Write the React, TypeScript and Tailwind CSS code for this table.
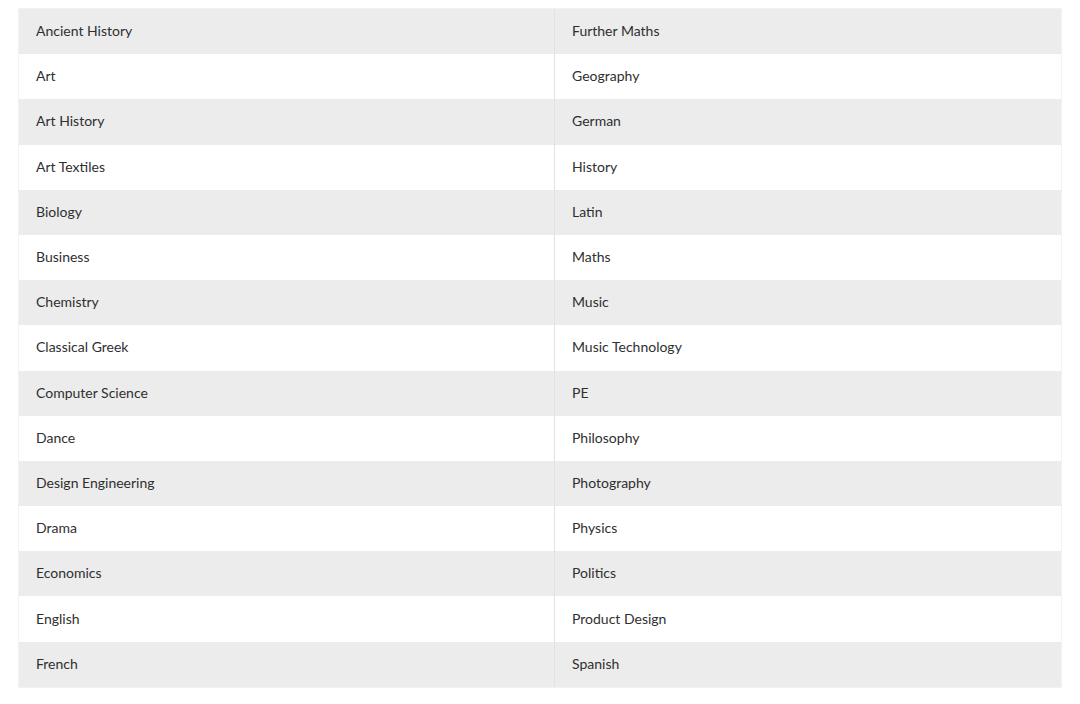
const rows: [string, string][] = [
  ["Ancient History", "Further Maths"],
  ["Art", "Geography"],
  ["Art History", "German"],
  ["Art Textiles", "History"],
  ["Biology", "Latin"],
  ["Business", "Maths"],
  ["Chemistry", "Music"],
  ["Classical Greek", "Music Technology"],
  ["Computer Science", "PE"],
  ["Dance", "Philosophy"],
  ["Design Engineering", "Photography"],
  ["Drama", "Physics"],
  ["Economics", "Politics"],
  ["English", "Product Design"],
  ["French", "Spanish"],
];

export default function App() {
  return (
    <div className="min-h-[704px] bg-white pt-2 pl-[18px] pr-[18px]" style={{ fontFamily: "Lato, 'Open Sans', sans-serif" }}>
      <div className="w-[1044px] border border-[#f2f2f2]">
        {rows.map(([a, b], i) => (
          <div
            key={a}
            className={`grid h-[45.2px] grid-cols-[536px_1fr] items-center text-[14px] text-[#2f2f2f] ${
              i % 2 === 0 ? "bg-[#ececec]" : "bg-white"
            }`}
          >
            <div className="flex h-full items-center border-r border-[#e2e2e2] pb-[2px] pl-[17px]">{a}</div>
            <div className="flex h-full items-center pb-[2px] pl-[17px]">{b}</div>
          </div>
        ))}
      </div>
    </div>
  );
}
